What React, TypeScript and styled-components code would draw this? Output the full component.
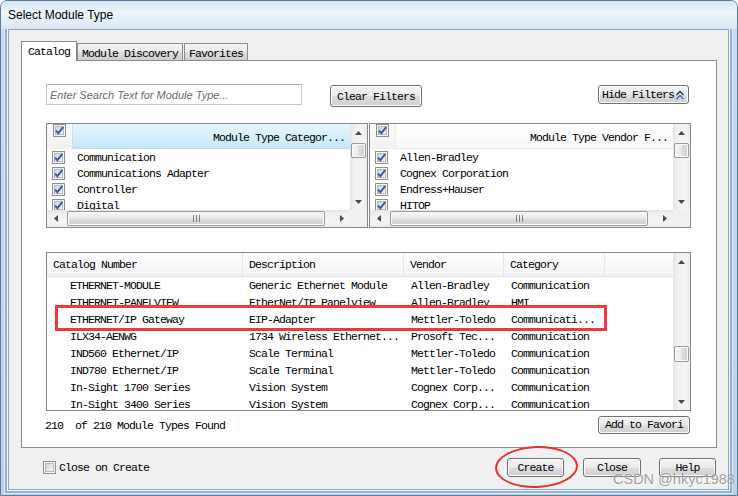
import React from "react";
import styled, { createGlobalStyle } from "styled-components";

const MONO = `"Liberation Mono", "DejaVu Sans Mono", monospace`;
const SANS = `"Liberation Sans", Arial, sans-serif`;

const GlobalStyle = createGlobalStyle`
  html, body { margin: 0; padding: 0; background: #ffffff; }
  body {
    font-family: ${MONO};
    font-size: 11.5px;
    letter-spacing: -0.9px;
    color: #000;
  }
  * { box-sizing: border-box; }
`;

const Window = styled.div`
  position: relative;
  width: 738px;
  height: 496px;
  display: flex;
  flex-direction: column;
  padding: 0 8px 5px 7px;
  border: 1px solid #5d7a99;
  border-radius: 7px 7px 0 0;
  background: linear-gradient(180deg, #c9dcee 0%, #bcd2e8 100%);
  overflow: hidden;
`;

const TitleBar = styled.div`
  position: relative;
  z-index: 1;
  height: 28px;
  margin: 0 -8px 0 -7px;
  padding-left: 7px;
  display: flex;
  align-items: center;
  font-family: ${SANS};
  font-size: 12px;
  letter-spacing: 0;
  background: linear-gradient(180deg, #d8e6f2 0%, #edf5fa 40%, #e4eef7 75%, #d9e6f2 100%);
`;

const Client = styled.div`
  flex: 1;
  display: flex;
  flex-direction: column;
  background: #f0f0f0;
  border: 1px solid #8ea6bf;
  box-shadow: 0 0 0 1px #f3f7fb, 0 0 0 3px #92b2d6, 0 0 0 4px #dce8f3;
  padding: 11px 11px 0 12px;
`;

const TabStrip = styled.div`
  display: flex;
  align-items: flex-end;
  height: 19px;
`;

const Tab = styled.div<{ $active?: boolean }>`
  position: relative;
  z-index: ${(p) => (p.$active ? 2 : 0)};
  display: flex;
  align-items: center;
  height: ${(p) => (p.$active ? 20 : 17)}px;
  margin-bottom: ${(p) => (p.$active ? -1 : 0)}px;
  padding: ${(p) => (p.$active ? "0 6px" : "2px 4px 0")};
  border: 1px solid #898c95;
  border-bottom: 0;
  background: ${(p) =>
    p.$active ? "#ffffff" : "linear-gradient(180deg, #f3f3f3 0%, #ebebeb 50%, #dddddd 51%, #cfcfcf 100%)"};
  white-space: nowrap;
`;

const TabPanel = styled.div`
  height: 388px;
  display: flex;
  flex-direction: column;
  border: 1px solid #898c95;
  background: #ffffff;
  padding: 23px 25px 0 24px;
`;

const SearchRow = styled.div`
  display: flex;
  align-items: flex-start;
  height: 23px;
`;

const SearchBox = styled.input`
  width: 256px;
  height: 21px;
  margin: 0;
  padding: 0 3px;
  border: 1px solid #c6c9ce;
  border-top-color: #abadb3;
  font-family: ${SANS};
  font-size: 11px;
  letter-spacing: 0;
  outline: none;
  &::placeholder {
    color: #6d6d6d;
    font-style: italic;
  }
`;

const Button = styled.button<{ $w: number; $h: number }>`
  width: ${(p) => p.$w}px;
  height: ${(p) => p.$h}px;
  margin: 0;
  padding: 0;
  display: inline-flex;
  align-items: center;
  justify-content: center;
  gap: 1px;
  border: 1px solid #707070;
  border-radius: 3px;
  background: linear-gradient(180deg, #f2f2f2 0%, #ebebeb 50%, #dddddd 51%, #cfcfcf 100%);
  box-shadow: inset 0 0 0 1px #fbfbfb;
  font-family: ${MONO};
  font-size: 11.5px;
  letter-spacing: -0.9px;
  color: #000;
  white-space: nowrap;
  overflow: hidden;
`;

const ClearButton = styled(Button)`
  margin: 1px 0 0 28px;
`;

const HideButton = styled(Button)`
  margin: 1px 2px 0 auto;
`;

const FiltersRow = styled.div`
  display: flex;
  gap: 1px;
  margin-top: 16px;
  height: 105px;
`;

const FilterBox = styled.div<{ $w?: number }>`
  flex: ${(p) => (p.$w ? `0 0 ${p.$w}px` : "1")};
  display: grid;
  grid-template-columns: 1fr 17px;
  grid-template-rows: 1fr 17px;
  border: 1px solid #828790;
  background: #fff;
  overflow: hidden;
`;

const Viewport = styled.div`
  overflow: hidden;
  min-width: 0;
`;

const FilterHeader = styled.div`
  display: flex;
  height: 25px;
`;

const HeaderCheckCell = styled.div`
  flex: 0 0 25px;
  padding: 0 0 0 6px;
  background: linear-gradient(180deg, #fbfbfb 0%, #f1f1f1 100%);
`;

const HeaderTitle = styled.div<{ $active?: boolean }>`
  flex: 1;
  display: flex;
  align-items: flex-end;
  justify-content: flex-end;
  padding: 0 5px 4px 0;
  white-space: nowrap;
  border-left: 1px solid ${(p) => (p.$active ? "#bfe2f4" : "#ececec")};
  background: ${(p) =>
    p.$active
      ? "linear-gradient(180deg, #e6f5fd 0%, #d9f0fc 45%, #c6e7f8 100%)"
      : "linear-gradient(180deg, #ffffff 0%, #f7f7f7 100%)"};
  border-bottom: 1px solid ${(p) => (p.$active ? "#b5dcf1" : "#e6e6e6")};
`;

const FilterRow = styled.div`
  display: flex;
  align-items: center;
  gap: 12px;
  height: 16px;
  padding-left: 5px;
  white-space: nowrap;
`;

const VTrack = styled.div`
  display: flex;
  flex-direction: column;
  background: linear-gradient(90deg, #e4e4e4 0%, #f0f0f0 25%, #f4f4f4 75%, #ebebeb 100%);
  overflow: hidden;
`;

const HTrack = styled.div`
  display: flex;
  background: linear-gradient(180deg, #e4e4e4 0%, #f0f0f0 25%, #f4f4f4 75%, #ebebeb 100%);
  overflow: hidden;
`;

const ArrowCell = styled.div`
  flex: 0 0 17px;
  width: 17px;
  height: 17px;
  display: flex;
  align-items: center;
  justify-content: center;
`;

const VThumb = styled.div<{ $top: number; $size: number }>`
  flex: 0 0 ${(p) => p.$size}px;
  margin: ${(p) => p.$top}px 0 0 1px;
  width: 15px;
  border: 1px solid #9a9a9a;
  border-radius: 2px;
  background: linear-gradient(90deg, #f6f6f6 0%, #ececec 45%, #dcdcdc 55%, #d0d0d0 100%);
  box-shadow: inset 0 0 0 1px #fafafa;
`;

const HThumb = styled.div<{ $left: number; $size: number }>`
  flex: 0 0 ${(p) => p.$size}px;
  margin: 1px 0 1px ${(p) => p.$left}px;
  height: 15px;
  display: flex;
  align-items: center;
  justify-content: center;
  border: 1px solid #9a9a9a;
  border-radius: 2px;
  background: linear-gradient(180deg, #f6f6f6 0%, #ececec 45%, #dcdcdc 55%, #d0d0d0 100%);
  box-shadow: inset 0 0 0 1px #fafafa;
`;

const Spacer = styled.div`
  flex: 1;
`;

const Corner = styled.div`
  background: #f0f0f0;
`;

const TableBox = styled.div`
  position: relative;
  margin-top: 24px;
  height: 159px;
  display: grid;
  grid-template-columns: 1fr 17px;
  border: 1px solid #828790;
  background: #fff;
`;

const COLS = "196px 161px 100px 101px 1fr";

const HeadRow = styled.div`
  display: grid;
  grid-template-columns: ${COLS};
  height: 24px;
  background: linear-gradient(180deg, #ffffff 0%, #f8f9fa 45%, #f1f2f4 100%);
  border-bottom: 1px solid #e2e3e5;
`;

const HeadCell = styled.div`
  display: flex;
  align-items: center;
  padding-left: 6px;
  border-right: 1px solid #e4e5e7;
  white-space: nowrap;
  overflow: hidden;
  &:last-child {
    border-right: 0;
  }
`;

const BodyRow = styled.div`
  display: grid;
  grid-template-columns: ${COLS};
  align-items: center;
  height: 17px;
`;

const BodyCell = styled.div<{ $pad: number }>`
  padding-left: ${(p) => p.$pad}px;
  white-space: nowrap;
  overflow: hidden;
`;

const Highlight = styled.div`
  position: absolute;
  left: 8px;
  top: 52px;
  width: 552px;
  height: 26px;
  border: 3px solid #ec3a3d;
  pointer-events: none;
`;

const FooterRow = styled.div`
  display: flex;
  align-items: center;
  margin-top: 5px;
  height: 17px;
`;

const CountText = styled.span`
  margin-left: -1px;
  padding-top: 1px;
  white-space: pre;
`;

const FavButton = styled(Button)`
  margin: 0 1px 0 auto;
`;

const BottomBar = styled.div`
  display: flex;
  align-items: center;
  margin-top: 10px;
  height: 19px;
`;

const CheckLabel = styled.label`
  display: flex;
  align-items: center;
  gap: 3px;
  margin-left: 22px;
  white-space: nowrap;
`;

const ButtonGroup = styled.div`
  display: flex;
  align-items: center;
  margin-left: auto;
  margin-right: 1px;
`;

const CreateWrap = styled.div`
  position: relative;
`;

const Ellipse = styled.div`
  position: absolute;
  left: -12px;
  top: -12px;
  width: 83px;
  height: 42px;
  border: 2.5px solid #e2332f;
  border-radius: 50%;
  transform: rotate(-2deg);
  pointer-events: none;
`;

const Watermark = styled.div`
  position: absolute;
  left: 612px;
  top: 470px;
  font-family: ${SANS};
  font-size: 14.5px;
  letter-spacing: 0;
  color: rgba(120, 120, 120, 0.7);
  text-shadow: 0 0 2px rgba(255, 255, 255, 0.9);
  white-space: nowrap;
  pointer-events: none;
`;

function CheckBox({ checked }: { checked: boolean }) {
  return (
    <svg width="13" height="13" viewBox="0 0 13 13" style={{ flex: "0 0 13px" }}>
      <defs>
        <linearGradient id="cbInner" x1="0" y1="0" x2="1" y2="1">
          <stop offset="0" stopColor="#cdd1d6" />
          <stop offset="1" stopColor="#f8f8f8" />
        </linearGradient>
      </defs>
      <rect x="0.5" y="0.5" width="12" height="12" fill="#f6f6f6" stroke="#8e8f8f" />
      <rect x="2.5" y="2.5" width="8" height="8" fill="url(#cbInner)" stroke="#b4b8bd" />
      {checked && (
        <path d="M3 6.6 L5.4 9.2 L10.2 3" fill="none" stroke="#3656a6" strokeWidth="1.9" />
      )}
    </svg>
  );
}

function Arrow({ dir }: { dir: "up" | "down" | "left" | "right" }) {
  const paths = {
    up: "M0 4 L3.5 0 L7 4 Z",
    down: "M0 0 L7 0 L3.5 4 Z",
    left: "M4 0 L4 7 L0 3.5 Z",
    right: "M0 0 L4 3.5 L0 7 Z",
  };
  const vertical = dir === "up" || dir === "down";
  return (
    <svg width={vertical ? 7 : 4} height={vertical ? 4 : 7} viewBox={vertical ? "0 0 7 4" : "0 0 4 7"}>
      <path d={paths[dir]} fill="#4a4a4a" />
    </svg>
  );
}

function Grip() {
  return (
    <svg width="7" height="7" viewBox="0 0 7 7">
      <path d="M0.5 0 V7 M3.5 0 V7 M6.5 0 V7" stroke="#7d7d7d" strokeWidth="1" />
    </svg>
  );
}

function DoubleChevron() {
  return (
    <svg width="10" height="10" viewBox="0 0 10 10">
      <path d="M1.5 5 L5 1.5 L8.5 5" fill="none" stroke="#1d3557" strokeWidth="1.4" />
      <path d="M1.5 9 L5 5.5 L8.5 9" fill="none" stroke="#3d6aa5" strokeWidth="1.4" />
    </svg>
  );
}

function VScroll({ top, size }: { top: number; size: number }) {
  return (
    <VTrack>
      <ArrowCell>
        <Arrow dir="up" />
      </ArrowCell>
      <VThumb $top={top} $size={size} />
      <Spacer />
      <ArrowCell>
        <Arrow dir="down" />
      </ArrowCell>
    </VTrack>
  );
}

function HScroll() {
  return (
    <HTrack>
      <ArrowCell>
        <Arrow dir="left" />
      </ArrowCell>
      <HThumb $left={3} $size={258}>
        <Grip />
      </HThumb>
      <Spacer />
      <ArrowCell>
        <Arrow dir="right" />
      </ArrowCell>
    </HTrack>
  );
}

interface FilterListProps {
  title: string;
  items: string[];
  active?: boolean;
  width?: number;
}

function FilterList(props: FilterListProps) {
  return (
    <FilterBox $w={props.width}>
      <Viewport>
        <FilterHeader>
          <HeaderCheckCell>
            <CheckBox checked />
          </HeaderCheckCell>
          <HeaderTitle $active={props.active}>{props.title}</HeaderTitle>
        </FilterHeader>
        {props.items.map((item) => (
          <FilterRow key={item}>
            <CheckBox checked />
            <span>{item}</span>
          </FilterRow>
        ))}
      </Viewport>
      <VScroll top={2} size={15} />
      <HScroll />
      <Corner />
    </FilterBox>
  );
}

const categories = ["Communication", "Communications Adapter", "Controller", "Digital", "Drive"];
const vendors = ["Allen-Bradley", "Cognex Corporation", "Endress+Hauser", "HITOP", "Mettler-Toledo"];

const columns = ["Catalog Number", "Description", "Vendor", "Category", ""];
const pads = [23, 6, 7, 7];

const modules = [
  ["ETHERNET-MODULE", "Generic Ethernet Module", "Allen-Bradley", "Communication"],
  ["ETHERNET-PANELVIEW", "EtherNet/IP Panelview", "Allen-Bradley", "HMI"],
  ["ETHERNET/IP Gateway", "EIP-Adapter", "Mettler-Toledo", "Communicati..."],
  ["ILX34-AENWG", "1734 Wireless Ethernet...", "Prosoft Tec...", "Communication"],
  ["IND560 Ethernet/IP", "Scale Terminal", "Mettler-Toledo", "Communication"],
  ["IND780 Ethernet/IP", "Scale Terminal", "Mettler-Toledo", "Communication"],
  ["In-Sight 1700 Series", "Vision System", "Cognex Corp...", "Communication"],
  ["In-Sight 3400 Series", "Vision System", "Cognex Corp...", "Communication"],
];

export default function App() {
  return (
    <>
      <GlobalStyle />
      <Window>
        <TitleBar>Select Module Type</TitleBar>
        <Client>
          <TabStrip>
            <Tab $active>Catalog</Tab>
            <Tab>Module Discovery</Tab>
            <Tab style={{ marginLeft: 1 }}>Favorites</Tab>
          </TabStrip>
          <TabPanel>
            <SearchRow>
              <SearchBox placeholder="Enter Search Text for Module Type..." />
              <ClearButton $w={92} $h={22}>
                Clear Filters
              </ClearButton>
              <HideButton $w={91} $h={19}>
                Hide Filters
                <DoubleChevron />
              </HideButton>
            </SearchRow>

            <FiltersRow>
              <FilterList title="Module Type Categor..." items={categories} active width={322} />
              <FilterList title="Module Type Vendor F..." items={vendors} />
            </FiltersRow>

            <TableBox>
              <Viewport>
                <HeadRow>
                  {columns.map((c, i) => (
                    <HeadCell key={i}>{c}</HeadCell>
                  ))}
                </HeadRow>
                {modules.map((row) => (
                  <BodyRow key={row[0]}>
                    {row.map((cell, i) => (
                      <BodyCell key={i} $pad={pads[i]}>
                        {cell}
                      </BodyCell>
                    ))}
                    <div />
                  </BodyRow>
                ))}
              </Viewport>
              <VScroll top={76} size={16} />
              <Highlight />
            </TableBox>

            <FooterRow>
              <CountText>210  of 210 Module Types Found</CountText>
              <FavButton $w={92} $h={18}>
                Add to Favori
              </FavButton>
            </FooterRow>
          </TabPanel>

          <BottomBar>
            <CheckLabel>
              <CheckBox checked={false} />
              Close on Create
            </CheckLabel>
            <ButtonGroup>
              <CreateWrap>
                <Button $w={57} $h={19}>
                  Create
                </Button>
                <Ellipse />
              </CreateWrap>
              <Button $w={58} $h={19} style={{ marginLeft: 19 }}>
                Close
              </Button>
              <Button $w={57} $h={19} style={{ marginLeft: 18 }}>
                Help
              </Button>
            </ButtonGroup>
          </BottomBar>
        </Client>
        <Watermark>CSDN @hkyc1988</Watermark>
      </Window>
    </>
  );
}
